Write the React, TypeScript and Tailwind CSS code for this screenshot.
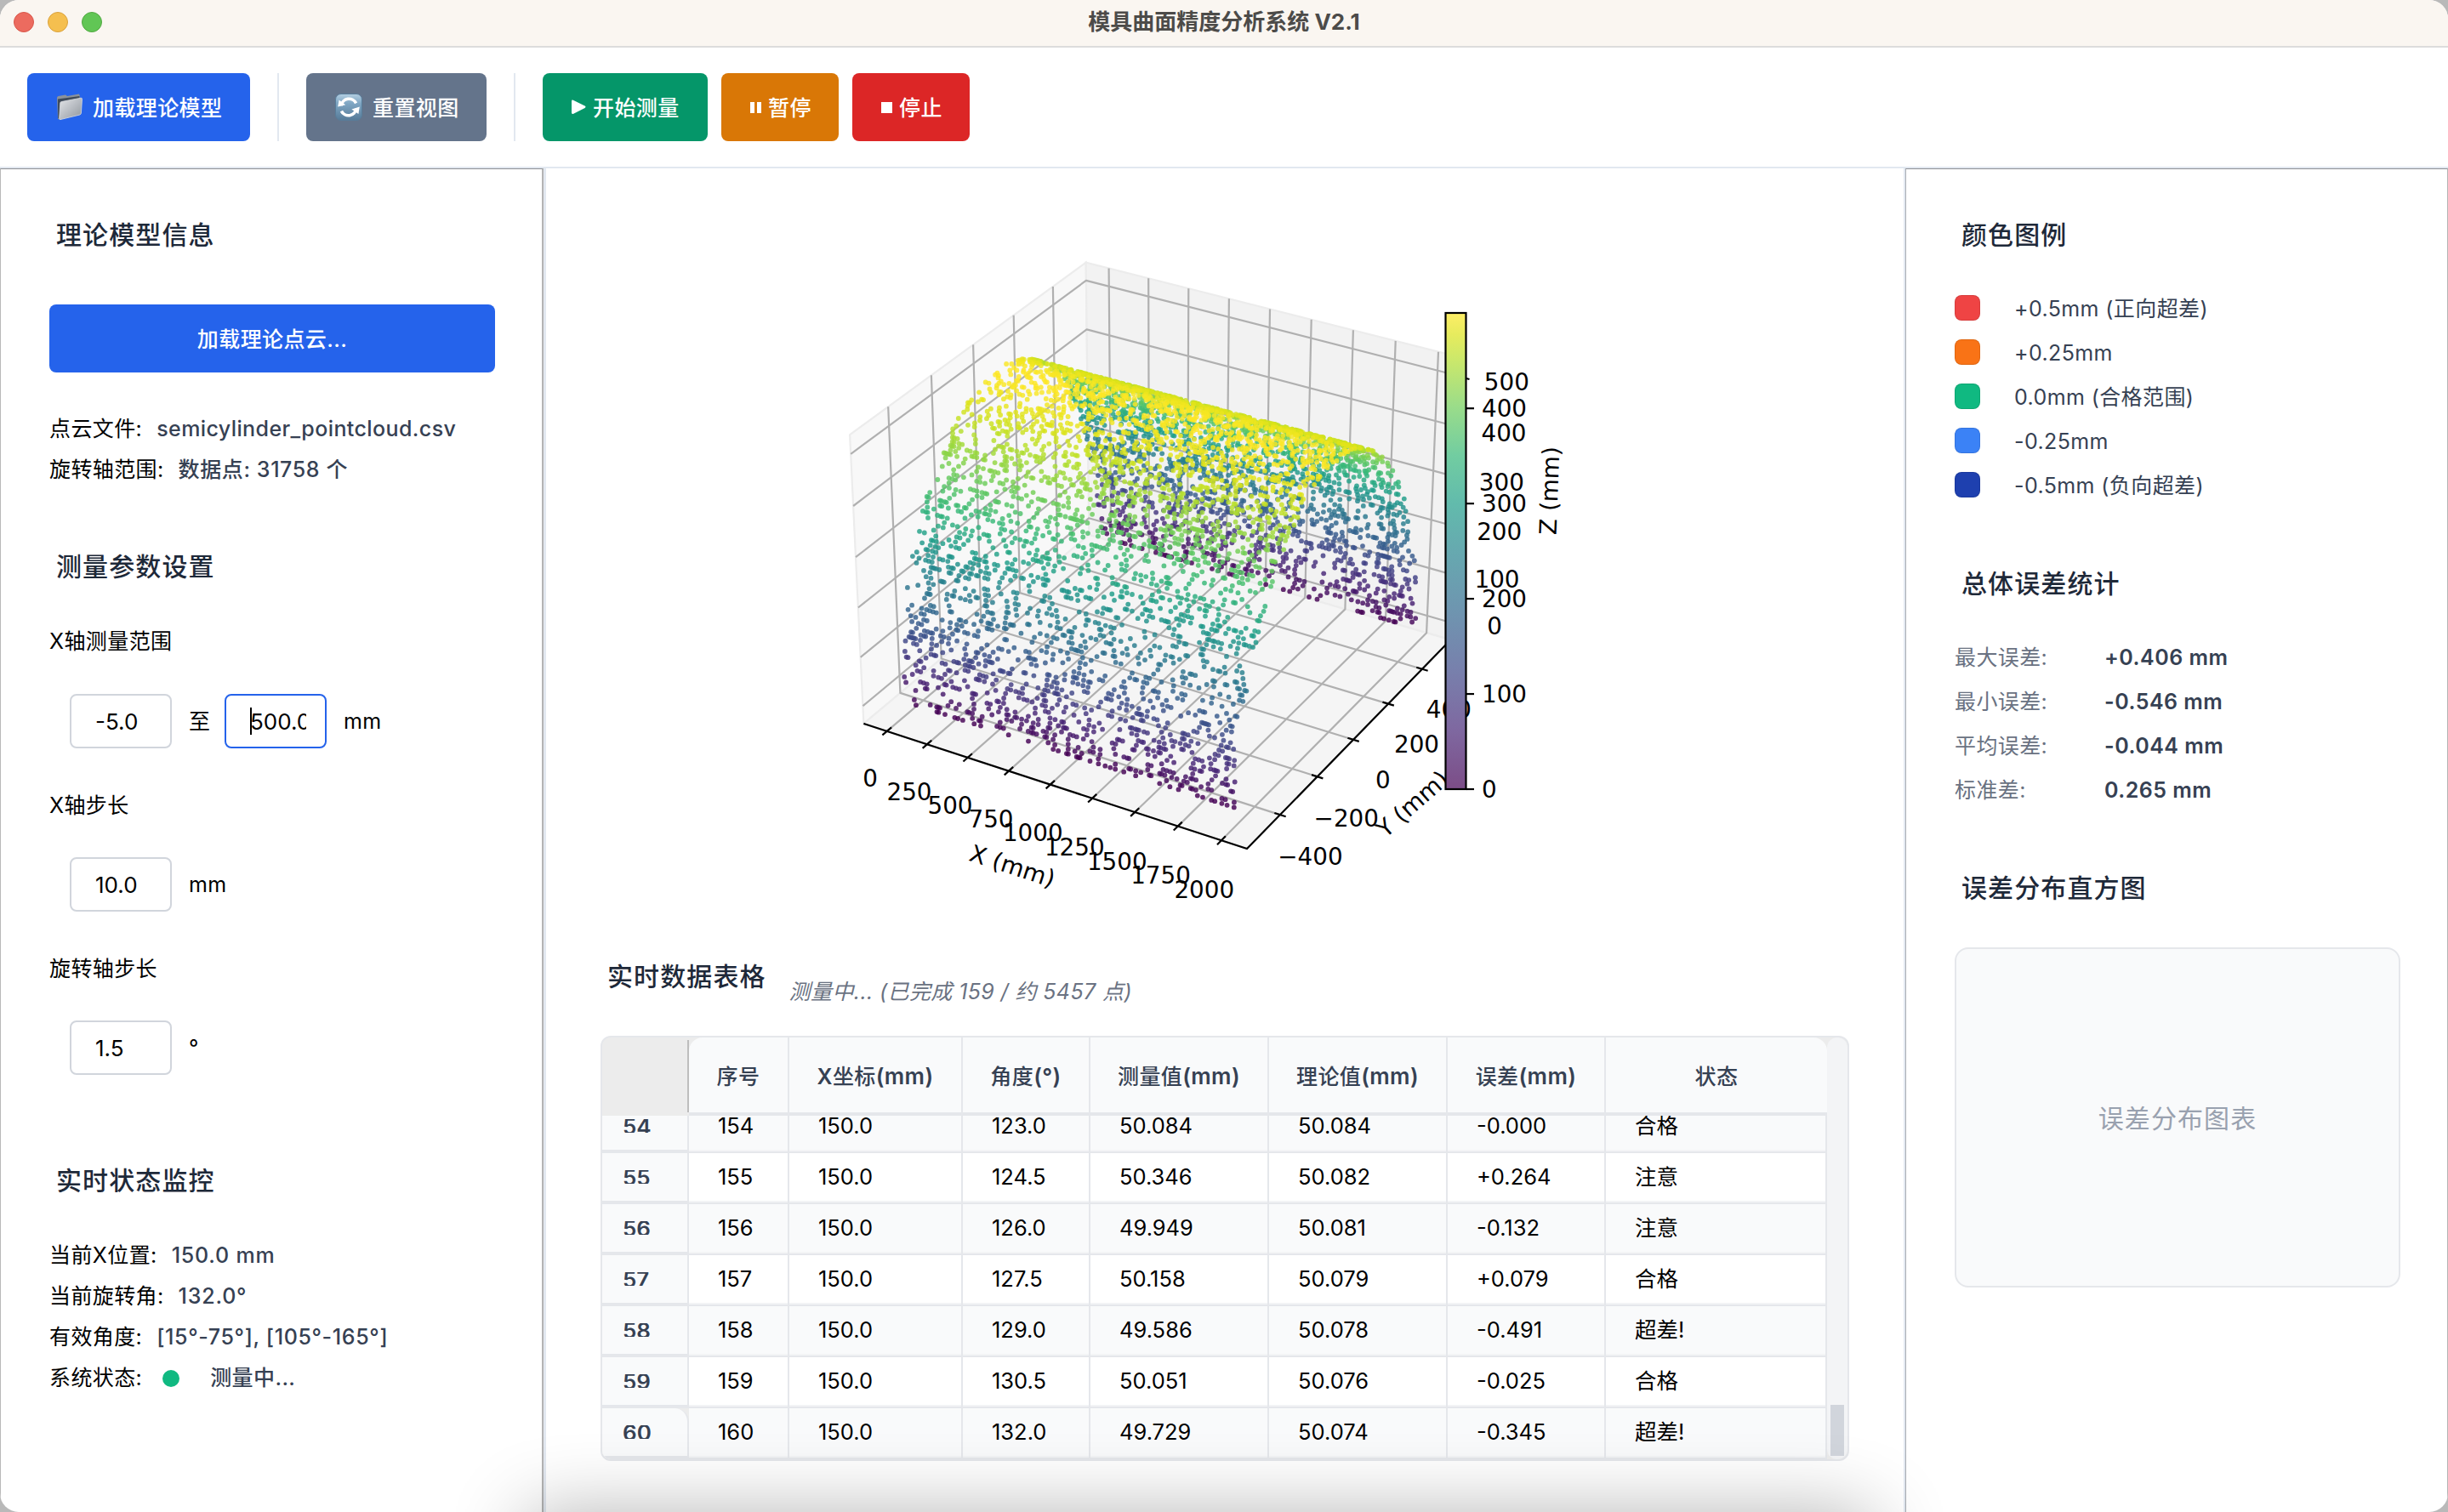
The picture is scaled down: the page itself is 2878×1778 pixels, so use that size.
import React from "react";

/* ---------- toolbar icons ---------- */

function FolderIcon() {
  return (
    <svg width="32" height="32" viewBox="0 0 32 32">
      <defs>
        <linearGradient id="folderFront" x1="0" y1="0" x2="1" y2="1">
          <stop offset="0" stopColor="#e3e5e8" />
          <stop offset="0.5" stopColor="#b9bdc3" />
          <stop offset="1" stopColor="#8f959c" />
        </linearGradient>
      </defs>
      <path d="M1 5 Q1 3.4 2.6 3.1 L11 1.6 L13 3 L27 0.6 L28 3 L28 8 L5 12 L3.4 30.5 L2 30 Z" fill="#8b929b" />
      <path d="M2 6.5 L27.5 3 L27.5 7 L5 10.5 L3.5 30 L2.2 29 Z" fill="#3f4b5a" />
      <path
        d="M6.2 9.6 L29 5.2 Q30.6 5 30.5 6.6 L29.4 23 Q29.2 24.6 27.8 25 L5 30.6 Q3.6 30.8 3.7 29.2 L4.8 11 Q5 9.8 6.2 9.6 Z"
        fill="url(#folderFront)"
        stroke="#d9dce0"
        strokeWidth="0.8"
      />
    </svg>
  );
}

function RefreshIcon() {
  return (
    <svg width="32" height="32" viewBox="0 0 32 32">
      <defs>
        <linearGradient id="refreshTile" x1="0" y1="0" x2="0" y2="1">
          <stop offset="0" stopColor="#b4cfe2" />
          <stop offset="0.35" stopColor="#80a7c4" />
          <stop offset="1" stopColor="#557a98" />
        </linearGradient>
      </defs>
      <rect x="0.5" y="0.5" width="31" height="31" rx="6.5" fill="url(#refreshTile)" stroke="#587c99" />
      <path d="M7.2 14.2 A 9.2 9.2 0 0 1 24.6 11.4" fill="none" stroke="#fff" strokeWidth="3.6" />
      <path d="M3.2 15.4 L4.6 7.6 L12.2 13.2 Z" fill="#fff" />
      <path d="M24.8 17.8 A 9.2 9.2 0 0 1 7.4 20.6" fill="none" stroke="#fff" strokeWidth="3.6" />
      <path d="M28.8 15.4 L27.4 24 L19.4 18.6 Z" fill="#fff" />
    </svg>
  );
}

function PlayIcon() {
  return (
    <svg width="17" height="18" viewBox="0 0 17 18">
      <path d="M0 2 Q0 0.2 1.8 0.7 L15.6 7.6 Q17.4 8.8 15.6 10 L1.8 16.9 Q0 17.4 0 15.6 Z" fill="#fff" />
    </svg>
  );
}

/* ---------- 3D scatter plot ---------- */

const ASPECT = [1.1905, 1.1905, 0.8929];
const LIM = [
  [-145.8, 2145.8],
  [-572.9, 572.9],
  [-36.5, 536.5],
];
const [X0, X1] = LIM[0];
const [Y0, Y1] = LIM[1];
const [Z0, Z1] = LIM[2];

function project(x: number, y: number, z: number) {
  const p = [x, y, z].map((v, i) => ((v - LIM[i][0]) / (LIM[i][1] - LIM[i][0]) - 0.5) * ASPECT[i]);
  const depth = 10 - (0.433 * p[0] - 0.75 * p[1] + 0.5 * p[2]);
  const u = (0.866 * p[0] + 0.5 * p[1]) / depth;
  const v = (-0.25 * p[0] + 0.433 * p[1] + 0.866 * p[2]) / depth;
  return { x: 1366.8 + 4336 * u, y: 635.8 - 4336 * v, depth };
}

const VIRIDIS = [
  [68, 1, 84], [72, 40, 120], [62, 74, 137], [49, 104, 142], [38, 130, 142], [31, 158, 137],
  [53, 183, 121], [109, 205, 89], [180, 222, 44], [220, 227, 25], [253, 231, 37],
];
const STOPS = [0, 0.125, 0.25, 0.375, 0.49, 0.6, 0.7, 0.8, 0.9, 0.955, 1];

function viridis(t: number) {
  let i = 0;
  while (i < STOPS.length - 2 && t > STOPS[i + 1]) i++;
  const f = (t - STOPS[i]) / (STOPS[i + 1] - STOPS[i]);
  const c = VIRIDIS[i].map((a, k) => Math.round(a + (VIRIDIS[i + 1][k] - a) * f));
  return `rgb(${c[0]},${c[1]},${c[2]})`;
}

function seeded(seed: number) {
  let a = seed;
  return () => {
    a = (a + 0x6d2b79f5) | 0;
    let t = Math.imul(a ^ (a >>> 15), 1 | a);
    t = (t + Math.imul(t ^ (t >>> 7), 61 | t)) ^ t;
    return ((t ^ (t >>> 14)) >>> 0) / 4294967296;
  };
}

const CLOUD = (() => {
  const rand = seeded(42);
  const pts: { x: number; y: number; depth: number; c: string }[] = [];
  for (let i = 0; i <= 200; i++) {
    for (let j = 0; j < 158; j++) {
      if (rand() > 0.16) continue;
      const th = (j / 157) * Math.PI;
      const z = 500 * Math.sin(th);
      pts.push({ ...project(i * 10, 500 * Math.cos(th), z), c: viridis(z / 500) });
    }
  }
  return pts.sort((a, b) => b.depth - a.depth);
})();

function poly(...pts: number[][]) {
  return pts
    .map((p) => {
      const q = project(p[0], p[1], p[2]);
      return `${q.x.toFixed(1)},${q.y.toFixed(1)}`;
    })
    .join(" ");
}

const XT = [0, 250, 500, 750, 1000, 1250, 1500, 1750, 2000];
const YT = [-400, -200, 0, 200, 400];
const ZT = [0, 100, 200, 300, 400, 500];

const TICK_LABELS: [string, number, number][] = [
  ["0", 1023, 914], ["250", 1069, 930], ["500", 1117, 946], ["750", 1165, 962], ["1000", 1214.3, 978.2],
  ["1250", 1263.3, 995], ["1500", 1313.3, 1011.5], ["1750", 1364.5, 1028.4], ["2000", 1415.8, 1044.8],
  ["−400", 1540.4, 1006], ["−200", 1582.8, 960.6], ["0", 1625.9, 916], ["200", 1665.5, 874.2], ["400", 1703.4, 833.3],
  ["500", 1771.3, 447.6], ["400", 1768, 507.7], ["300", 1765.3, 565.8], ["200", 1762.7, 623.5], ["100", 1760, 679.7], ["0", 1757, 735.4],
];

function Tick({ at, toward }: { at: number[]; toward: number[] }) {
  const a = project(at[0], at[1], at[2]);
  const b = project(toward[0], toward[1], toward[2]);
  const len = Math.hypot(b.x - a.x, b.y - a.y);
  const dx = (b.x - a.x) / len;
  const dy = (b.y - a.y) / len;
  return <line x1={a.x - dx * 7} y1={a.y - dy * 7} x2={a.x + dx * 7} y2={a.y + dy * 7} />;
}

function PointCloudPlot() {
  return (
    <svg width="900" height="820" viewBox="960 270 900 820" className="block shrink-0">
      <defs>
        <linearGradient id="zScale" x1="0" y1="1" x2="0" y2="0">
          {STOPS.map((s) => (
            <stop key={s} offset={s} stopColor={viridis(s)} />
          ))}
        </linearGradient>
      </defs>
      <g stroke="#ececec" strokeWidth="2.2">
        <polygon fill="#f8f8f8" points={poly([X0, Y0, Z0], [X0, Y1, Z0], [X0, Y1, Z1], [X0, Y0, Z1])} />
        <polygon fill="#f2f2f2" points={poly([X0, Y1, Z0], [X1, Y1, Z0], [X1, Y1, Z1], [X0, Y1, Z1])} />
        <polygon fill="#f5f5f5" points={poly([X0, Y0, Z0], [X1, Y0, Z0], [X1, Y1, Z0], [X0, Y1, Z0])} />
      </g>
      <g fill="none" stroke="#b0b0b0" strokeWidth="2.2" strokeLinejoin="round">
        {XT.map((x) => (
          <polyline key={`x${x}`} points={poly([x, Y0, Z0], [x, Y1, Z0], [x, Y1, Z1])} />
        ))}
        {YT.map((y) => (
          <polyline key={`y${y}`} points={poly([X0, y, Z1], [X0, y, Z0], [X1, y, Z0])} />
        ))}
        {ZT.map((z) => (
          <polyline key={`z${z}`} points={poly([X0, Y0, z], [X0, Y1, z], [X1, Y1, z])} />
        ))}
      </g>
      <g stroke="#000" strokeWidth="2.2" fill="none">
        <polyline points={poly([X0, Y0, Z0], [X1, Y0, Z0], [X1, Y1, Z0], [X1, Y1, Z1])} />
        {XT.map((x) => (
          <Tick key={x} at={[x, Y0, Z0]} toward={[x, Y1, Z0]} />
        ))}
        {YT.map((y) => (
          <Tick key={y} at={[X1, y, Z0]} toward={[X0, y, Z0]} />
        ))}
      </g>
      <g fillOpacity="0.82">
        {CLOUD.map((p, i) => (
          <circle key={i} cx={p.x.toFixed(1)} cy={p.y.toFixed(1)} r="2.9" fill={p.c} />
        ))}
      </g>
      <g fontFamily="DejaVu Sans" fontSize="27.8" fill="#000" textAnchor="middle">
        {TICK_LABELS.map(([t, x, y], i) => (
          <text key={i} x={x} y={y + 10}>
            {t}
          </text>
        ))}
        <text transform="translate(1190 1018) rotate(18.1)" y="9">X (mm)</text>
        <text transform="translate(1661 945) rotate(-41.3)" y="9">Y (mm)</text>
        <text transform="translate(1822.5 576) rotate(-87.8)" y="9">Z (mm)</text>
      </g>
      <rect x="1699.5" y="367" width="24" height="560" fill="#fff" />
      <rect x="1699.5" y="367" width="24" height="560" fill="url(#zScale)" fillOpacity="0.7" />
      <rect x="1699.5" y="367" width="24" height="560" fill="none" stroke="#000" strokeWidth="2.2" />
      <line x1="1724" y1="444" x2="1727.5" y2="445" stroke="#000" strokeWidth="2.2" />
      <g fontFamily="DejaVu Sans" fontSize="27.8" fill="#000">
        {[0, 100, 200, 300, 400].map((v) => (
          <g key={v}>
            <line x1="1724" x2="1733" y1={927 - v * 1.1195} y2={927 - v * 1.1195} stroke="#000" strokeWidth="2.2" />
            <text x="1742" y={937 - v * 1.1195}>
              {v}
            </text>
          </g>
        ))}
      </g>
    </svg>
  );
}

/* ---------- shared pieces ---------- */

function SectionTitle({ children, className = "" }: { children: React.ReactNode; className?: string }) {
  return (
    <h2 className={`flex h-[60px] items-center pl-2 text-[30px] font-medium tracking-[1.1px] text-gray-800 ${className}`}>
      {children}
    </h2>
  );
}

function InfoRow({
  label,
  gap = "ml-[17px]",
  spacing = "",
  children,
}: {
  label: string;
  gap?: string;
  spacing?: string;
  children: React.ReactNode;
}) {
  return (
    <div className="flex h-12 items-center pt-[3px]">
      <span className="text-black">{label}</span>
      <span className={`flex items-center font-medium text-gray-700 ${gap} ${spacing}`}>{children}</span>
    </div>
  );
}

function Field({ value }: { value: string }) {
  return (
    <div className="flex h-16 w-[120px] items-center rounded-lg border-2 border-gray-300 bg-white pl-7 text-[26px] tracking-normal text-black">
      {value}
    </div>
  );
}

/* ---------- table ---------- */

const HEADERS: [string, string][] = [
  ["序号", ""],
  ["X坐标", "(mm)"],
  ["角度", "(°)"],
  ["测量值", "(mm)"],
  ["理论值", "(mm)"],
  ["误差", "(mm)"],
  ["状态", ""],
];
const ROWS: string[][] = [
  ["54", "154", "150.0", "123.0", "50.084", "50.084", "-0.000", "合格"],
  ["55", "155", "150.0", "124.5", "50.346", "50.082", "+0.264", "注意"],
  ["56", "156", "150.0", "126.0", "49.949", "50.081", "-0.132", "注意"],
  ["57", "157", "150.0", "127.5", "50.158", "50.079", "+0.079", "合格"],
  ["58", "158", "150.0", "129.0", "49.586", "50.078", "-0.491", "超差!"],
  ["59", "159", "150.0", "130.5", "50.051", "50.076", "-0.025", "合格"],
  ["60", "160", "150.0", "132.0", "49.729", "50.074", "-0.345", "超差!"],
];
const COLS = "grid-cols-[102px_118px_204px_150px_210px_210px_186px_260px]";

function DataTable() {
  return (
    <div className="flex h-[500px] w-[1468px] overflow-hidden rounded-xl border-2 border-gray-200 bg-[#ececec]">
      <div className="flex w-[1440px] flex-col">
        <div className={`grid h-[92px] shrink-0 ${COLS}`}>
          <div className="bg-[#ececec] pt-[3px]">
            <div className="h-[85px] border-r-2 border-[#bdbdbd]" />
          </div>
          {HEADERS.map(([name, unit], i) => (
            <div
              key={name}
              className={`flex items-center justify-center border-b-4 border-gray-200 bg-gray-50 pt-1 text-[25px] font-medium tracking-[0.4px] text-gray-700 ${
                i === 0 ? "rounded-tl-2xl" : ""
              } ${i === 6 ? "rounded-tr-2xl" : "border-r-2"}`}
            >
              <span>
                {name.startsWith("X") ? <span className="font-semibold">X</span> : null}
                {name.replace("X", "")}
                <span className="text-[26px] font-semibold">{unit}</span>
              </span>
            </div>
          ))}
        </div>
        <div className="flex flex-1 flex-col justify-end overflow-hidden bg-white">
          {ROWS.map((r, ri) => (
            <div key={r[0]} className={`grid h-[60px] shrink-0 ${COLS}`}>
              <div className="bg-[#ececec]">
                <div
                  className={`flex h-full items-center border-r-2 border-b-4 border-gray-200 bg-gray-50 pl-6 ${
                    ri === 6 ? "rounded-tr-2xl" : ""
                  }`}
                >
                  <span className="block h-4 overflow-hidden text-[26px] leading-[18px] font-semibold text-gray-700">
                    {r[0]}
                  </span>
                </div>
              </div>
              {r.slice(1).map((c, ci) => (
                <div key={ci} className="flex flex-col border-r-2 border-b-2 border-gray-200">
                  <div
                    className={`flex flex-1 items-center border-b-2 border-gray-100 pl-[34px] text-[25.5px] text-black ${
                      ri % 2 ? "bg-white" : "bg-gray-50"
                    }`}
                  >
                    {c}
                  </div>
                </div>
              ))}
            </div>
          ))}
        </div>
      </div>
      <div className="flex w-6 flex-col justify-end rounded-xl bg-gray-100 px-1 pb-1">
        <div className="h-[60px] bg-gray-300" />
      </div>
    </div>
  );
}

/* ---------- page ---------- */

const LEGEND: [string, string][] = [
  ["bg-[#ef4444]", "+0.5mm (正向超差)"],
  ["bg-[#f97316]", "+0.25mm"],
  ["bg-[#10b981]", "0.0mm (合格范围)"],
  ["bg-[#3b82f6]", "-0.25mm"],
  ["bg-[#1e40af]", "-0.5mm (负向超差)"],
];

const STATS: [string, string][] = [
  ["最大误差:", "+0.406 mm"],
  ["最小误差:", "-0.546 mm"],
  ["平均误差:", "-0.044 mm"],
  ["标准差:", "0.265 mm"],
];

const BTN = "flex h-20 items-center rounded-lg text-[25px] font-medium tracking-[0.4px] text-white";

export default function App() {
  return (
    <div className="h-[1778px] w-[2878px] overflow-hidden bg-[#b9b9b9] font-['Inter','Noto_Sans_CJK_SC',sans-serif]">
      <div className="relative flex h-full w-full flex-col overflow-hidden rounded-[22px] bg-white">
        <header className="relative flex h-14 shrink-0 items-center justify-center border-b-2 border-[#dcdcdc] bg-[#faf6f1] pb-1">
          <div className="absolute top-3.5 left-4 flex gap-4">
            <span className="size-6 rounded-full border border-[#d8574b] bg-[#ec6b5f]" />
            <span className="size-6 rounded-full border border-[#d9a23d] bg-[#f5bf4f]" />
            <span className="size-6 rounded-full border border-[#52a842] bg-[#61c655]" />
          </div>
          <h1 className="text-[26px] font-bold text-[#4c4b49]">模具曲面精度分析系统 V2.1</h1>
        </header>

        <div className="flex h-[142px] shrink-0 items-center border-b-2 border-slate-200 pl-8">
          <button className={`${BTN} w-[262px] gap-[11px] bg-[#2563eb] pl-[34px]`}>
            <FolderIcon />
            <span className="pt-[3px]">加载理论模型</span>
          </button>
          <div className="mx-8 h-20 w-0.5 bg-slate-200" />
          <button className={`${BTN} w-[212px] gap-3 bg-[#64748b] pl-[34px]`}>
            <RefreshIcon />
            <span className="pt-[3px]">重置视图</span>
          </button>
          <div className="mx-8 h-20 w-0.5 bg-slate-200" />
          <button className={`${BTN} w-[194px] gap-2 bg-[#059669] pl-[34px]`}>
            <PlayIcon />
            <span className="pt-[3px]">开始测量</span>
          </button>
          <button className={`${BTN} ml-4 w-[138px] bg-[#d97706] pl-[34px]`}>
            <span className="mr-2 flex gap-[3px]">
              <span className="h-[13px] w-[5px] bg-white" />
              <span className="h-[13px] w-[5px] bg-white" />
            </span>
            <span className="pt-[3px]">暂停</span>
          </button>
          <button className={`${BTN} ml-4 w-[138px] bg-[#dc2626] pl-[34px]`}>
            <span className="mr-2 size-[13px] bg-white" />
            <span className="pt-[3px]">停止</span>
          </button>
        </div>

        <div className="flex min-h-0 flex-1">
          <aside className="w-[639px] shrink-0 border-t border-r-2 border-l border-t-[#8d9096] border-r-[#b4b4b4] border-l-[#b9b9b9] pl-[57px] text-[25px] font-normal tracking-[0.4px] text-black">
            <SectionTitle className="mt-[47px]">理论模型信息</SectionTitle>
            <button className="mt-[52px] flex h-20 w-[524px] items-center justify-center rounded-lg bg-[#2563eb] pt-[3px] font-medium text-white">
              加载理论点云...
            </button>
            <div className="mt-[41px]">
              <InfoRow label="点云文件:">semicylinder_pointcloud.csv</InfoRow>
              <InfoRow label="旋转轴范围:" spacing="tracking-[0.6px]">数据点: 31758 个</InfoRow>
            </div>
            <SectionTitle className="mt-[61px]">测量参数设置</SectionTitle>
            <div className="mt-[33px] flex h-12 items-center pt-[3px]">X轴测量范围</div>
            <div className="mt-[39px] flex items-center pl-6">
              <Field value="-5.0" />
              <span className="ml-5 w-[42px] pt-0.5">至</span>
              <div className="h-16 w-[120px] rounded-lg border-2 border-[#2563eb] bg-white px-6">
                <div className="mt-3.5 flex h-8 w-[70px] items-center overflow-hidden pl-1">
                  <span className="h-8 w-0.5 shrink-0 bg-black" />
                  <span className="-ml-0.5 text-[26px] tracking-normal">500.0</span>
                </div>
              </div>
              <span className="ml-5 pt-0.5">mm</span>
            </div>
            <div className="mt-[42px] flex h-12 items-center pt-[3px]">X轴步长</div>
            <div className="mt-[38px] flex items-center pl-6">
              <Field value="10.0" />
              <span className="ml-5 pt-0.5">mm</span>
            </div>
            <div className="mt-[42px] flex h-12 items-center pt-[3px]">旋转轴步长</div>
            <div className="mt-[38px] flex items-center pl-6">
              <Field value="1.5" />
              <span className="ml-5 pt-0.5">°</span>
            </div>
            <SectionTitle className="mt-[94px]">实时状态监控</SectionTitle>
            <div className="mt-[33px]">
              <InfoRow label="当前X位置:" spacing="tracking-[0.8px]">150.0 mm</InfoRow>
              <InfoRow label="当前旋转角:" spacing="tracking-[0.8px]">132.0°</InfoRow>
              <InfoRow label="有效角度:" spacing="tracking-[0.65px]">[15°-75°], [105°-165°]</InfoRow>
              <InfoRow label="系统状态:" gap="ml-6">
                <span className="mr-9 size-5 rounded-full bg-[#10b981]" />
                测量中...
              </InfoRow>
            </div>
          </aside>
          <div className="w-[3px] shrink-0 bg-slate-200" />

          <main className="flex flex-1 flex-col pl-16">
            <div className="mt-[73px] pl-[254px]">
              <PointCloudPlot />
            </div>
            <div className="mt-[27px] flex items-start">
              <h2 className="ml-2 flex h-[60px] items-center text-[30px] font-medium tracking-[1.1px] text-gray-800">
                实时数据表格
              </h2>
              <p className="mt-[18px] ml-[27px] flex h-[60px] items-center pt-0.5 text-[25px] tracking-[0.4px] text-gray-500 italic">
                测量中... (已完成 159 / 约 5457 点)
              </p>
            </div>
            <div className="mt-[22px]">
              <DataTable />
            </div>
          </main>

          <div className="w-[2px] shrink-0 bg-slate-200" />
          <aside className="w-[638px] shrink-0 border-t border-r border-l border-t-[#8d9096] border-r-[#b4b4b4] border-l-[#a9adb3] pl-[57px] text-[25px] tracking-[0.4px] text-gray-700">
            <SectionTitle className="mt-[47px]">颜色图例</SectionTitle>
            <div className="mt-[30px]">
              {LEGEND.map(([color, label]) => (
                <div key={label} className="flex h-[52px] items-center">
                  <span className={`mr-10 size-[30px] rounded-lg border border-black/10 ${color}`} />
                  <span className="pt-[3px]">{label}</span>
                </div>
              ))}
            </div>
            <SectionTitle className="mt-[60px]">总体误差统计</SectionTitle>
            <div className="mt-[30px]">
              {STATS.map(([label, value]) => (
                <div key={label} className="flex h-[52px] items-center pt-[3px]">
                  <span className="w-[176px] text-gray-500">{label}</span>
                  <span className="font-semibold tracking-[0.5px]">{value}</span>
                </div>
              ))}
            </div>
            <SectionTitle className="mt-[60px]">误差分布直方图</SectionTitle>
            <div className="mt-10 flex h-[400px] w-[524px] items-center justify-center rounded-2xl border-2 border-gray-200 bg-gray-50 pt-0.5 text-[30px] tracking-[1.1px] text-gray-400">
              误差分布图表
            </div>
          </aside>
        </div>

        <div className="pointer-events-none absolute top-[1800px] left-[640px] h-20 w-[1540px] shadow-[0_0_90px_20px_rgba(0,0,0,0.3)]" />
      </div>
    </div>
  );
}
